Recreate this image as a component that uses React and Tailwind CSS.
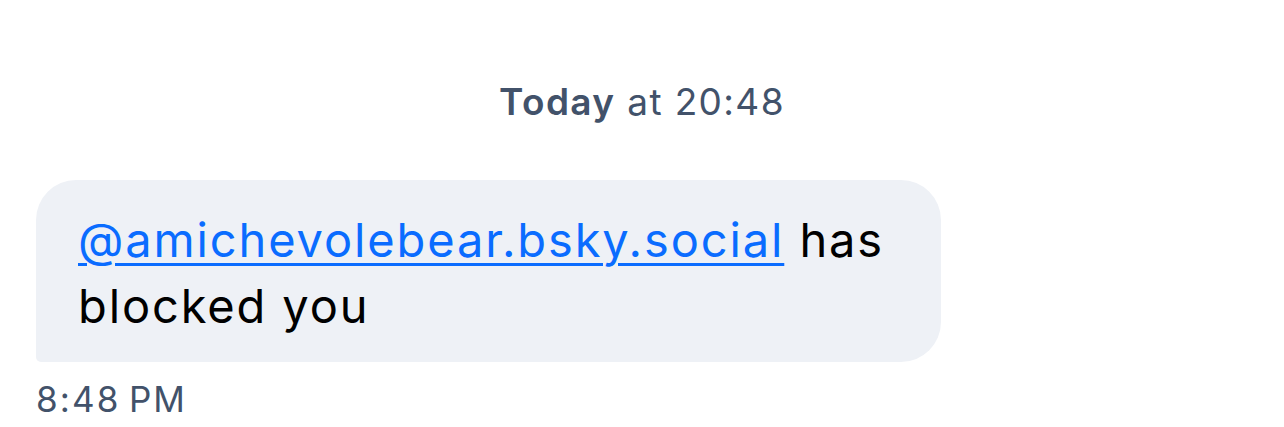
export default function App() {
  return (
    <div className="w-[1284px] h-[427px] bg-white overflow-hidden font-['Inter',sans-serif]">
      <div className="pt-[80px] text-center text-[37px] leading-[44px] tracking-[0.037em] text-[#42526a]">
        <span className="font-semibold">Today</span> at 20:48
      </div>
      <div className="mt-[56px] px-[36px]">
        <div className="w-[905px] bg-[#eef1f6] rounded-[40px] rounded-bl-[5px] pl-[42px] pr-[42px] pt-[27px] pb-[23px] text-[47px] leading-[66px] tracking-[0.04em] text-black">
          <a className="text-[#0a6cff] underline decoration-[3px] underline-offset-[6px]">@amichevolebear.bsky.social</a> has blocked you
        </div>
        <div className="mt-[17px] text-[35px] leading-[40px] tracking-[0.06em] text-[#42526a]">8:48{"\u202f"}PM</div>
      </div>
    </div>
  );
}
